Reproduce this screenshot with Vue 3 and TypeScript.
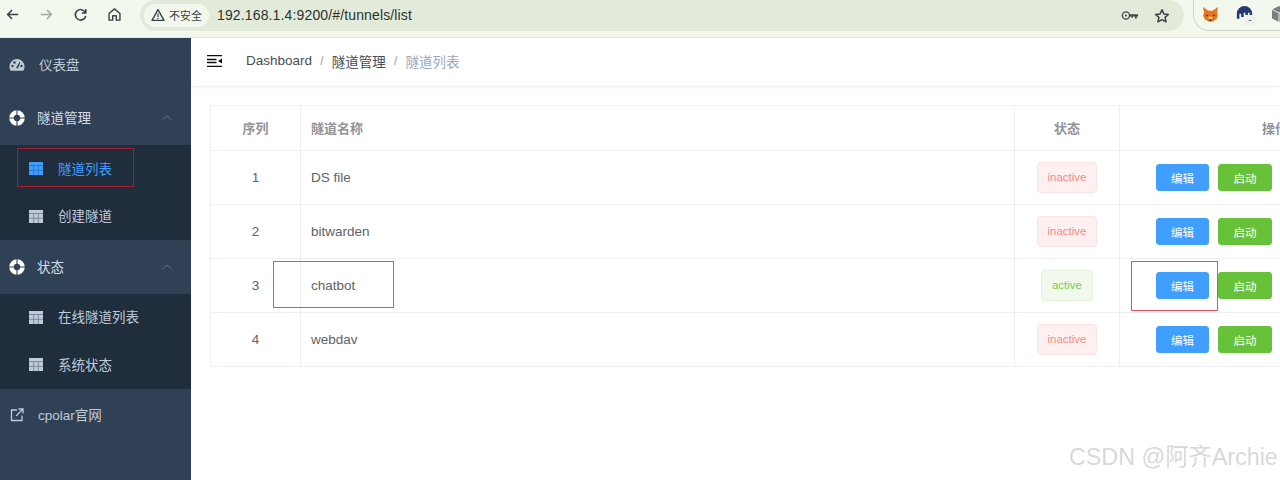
<script setup lang="ts">
interface Row { id: number; name: string; status: 'active' | 'inactive' }
const rows: Row[] = [
  { id: 1, name: 'DS file', status: 'inactive' },
  { id: 2, name: 'bitwarden', status: 'inactive' },
  { id: 3, name: 'chatbot', status: 'active' },
  { id: 4, name: 'webdav', status: 'inactive' },
]
const groups = [
  { title: '隧道管理', items: [{ label: '隧道列表', active: true }, { label: '创建隧道', active: false }] },
  { title: '状态', items: [{ label: '在线隧道列表', active: false }, { label: '系统状态', active: false }] },
]
</script>

<template>
  <div class="page">
    <div class="chrome">
      <div class="nav">
        <svg class="nav-ico" viewBox="0 0 16 16"><path d="M14 8H3M7.5 3.2 2.8 8l4.7 4.8" fill="none" stroke="#3c4043" stroke-width="1.6"/></svg>
        <svg class="nav-ico" viewBox="0 0 16 16"><path d="M2 8h11M8.5 3.2 13.2 8l-4.700 4.800" fill="none" stroke="#a3a7a0" stroke-width="1.6"/></svg>
        <svg class="nav-ico" viewBox="0 0 16 16"><path d="M13.2 6A5.600 5.600 0 1 0 13.600 9.400M13.600 2.200V6.400H9.400" fill="none" stroke="#3c4043" stroke-width="1.7"/></svg>
        <svg class="nav-ico" viewBox="0 0 16 16"><path d="M2.200 7 8 2l5.800 5v7h-3.900v-4.600H6.100V14H2.200Z" fill="none" stroke="#3c4043" stroke-width="1.5" stroke-linejoin="round"/></svg>
      </div>
      <div class="omni">
        <div class="sec">
          <svg class="warn" viewBox="0 0 14 14"><path d="M7 1.600 13 12.400H1Z" fill="none" stroke="#3c4043" stroke-width="1.4" stroke-linejoin="round"/><path d="M7 5.400v3.600M7 9.800v1.200" stroke="#3c4043" stroke-width="1.2"/></svg>
          <span>不安全</span>
        </div>
        <span class="url">192.168.1.4:9200/#/tunnels/list</span>
        <span class="grow"></span>
        <svg class="key" viewBox="0 0 20 12"><circle cx="5.500" cy="6" r="4" fill="none" stroke="#474a45" stroke-width="1.5"/><circle cx="5.500" cy="6" r="1.200" fill="#474a45"/><path d="M9.500 4.500H19V7h-1.500v2.200h-2V7h-2v1.600h-2V7H9.500Z" fill="#474a45"/></svg>
        <svg class="star" viewBox="0 0 16 16"><path d="M8 1.800l1.900 4.100 4.500.5-3.300 3 .9 4.500L8 11.700l-4 2.200.9-4.500-3.300-3 4.500-.5Z" fill="none" stroke="#3c4043" stroke-width="1.5" stroke-linejoin="round"/></svg>
      </div>
      <div class="exts">
        <svg class="fox" viewBox="0 0 18 18"><path d="M1 1l6 4h4l6-4-1.200 6 1 3-1.600 4-4 2.500H7L2.800 14l-1.600-4 1-3Z" fill="#e8751c"/><path d="M7 11l2 1 2-1-.5 3h-3Z" fill="#f4e3d0"/><path d="M8 14h2v2H8Z" fill="#3b2a1e"/><path d="M4 9l3 1-2 1ZM14 9l-3 1 2 1Z" fill="#3b2a1e"/></svg>
        <div class="avatar">
          <svg viewBox="0 0 20 20"><path d="M1 15V9a9 9 0 0 1 18 0v3h-3V8h-2v3h-3V8H9v5H6V9H4v6Z" fill="#25386f"/></svg>
          <span class="badge">-</span>
        </div>
        <svg class="cube" viewBox="0 0 18 18"><path d="M9 1l7 3.500v9L9 17l-7-3.500v-9Z" fill="#7c7f7b"/><path d="M2 4.500 9 8l7-3.500M9 8v9" fill="none" stroke="#e8ecdf" stroke-width="1"/></svg>
      </div>
    </div>

    <div class="body">
      <aside class="side">
        <a class="item top">
          <svg class="ico-gauge" viewBox="0 0 16 14"><path d="M8 1a7.500 7.500 0 0 0-7.500 7.500c0 1.600.5 3 1.300 4.200h12.400c.8-1.200 1.300-2.600 1.300-4.200A7.500 7.500 0 0 0 8 1Z" fill="#bfcbd9"/><circle cx="3.500" cy="8" r="1.200" fill="#304156"/><circle cx="5.500" cy="4.500" r="1.200" fill="#304156"/><circle cx="12.500" cy="8" r="1.200" fill="#304156"/><path d="M7 10 10.500 4l.8.400L9 10.500Z" fill="#304156"/></svg>
          <span>仪表盘</span>
        </a>
        <template v-for="g in groups" :key="g.title">
          <div class="item group">
            <svg class="ico-ring" viewBox="0 0 16 16"><circle cx="8" cy="8" r="5.500" fill="none" stroke="#fff" stroke-width="4.600"/><path d="M0 8h5M11 8h5M8 0v5M8 11v5" stroke="#304156" stroke-width="1.100"/></svg>
            <span class="g-title">{{ g.title }}</span>
            <svg class="chev" viewBox="0 0 12 8"><path d="M1.500 6 6 2l4.500 4" fill="none" stroke="#5d6d82" stroke-width="1"/></svg>
          </div>
          <div class="sub">
            <a v-for="it in g.items" :key="it.label" class="sub-item" :class="{ on: it.active }">
              <svg class="ico-table" viewBox="0 0 14 13"><path d="M0 0h14v13H0Z" fill="currentColor"/><path d="M0 3.500h14M0 8.300h14M4.700 3.500v9.500M9.300 3.500v9.500" :stroke="it.active ? '#1f6fc4' : '#6f7b8a'" stroke-width=".8"/></svg>
              <span>{{ it.label }}</span>
            </a>
          </div>
        </template>
        <a class="item top link">
          <svg class="ico-ext" viewBox="0 0 14 14"><path d="M7 2H1.500v10.500H12V7.500" fill="none" stroke="#bfcbd9" stroke-width="1.300"/><path d="M6 8l6.500-6.500M8.500 1h4.500v4.500" fill="none" stroke="#bfcbd9" stroke-width="1.300"/></svg>
          <span>cpolar官网</span>
        </a>
      </aside>

      <main class="main">
        <header class="head">
          <svg class="burger" viewBox="0 0 15 12"><path d="M0 .7h15M0 4.500h9.500M0 7.500h9.500M0 11.300h15" stroke="#111" stroke-width="1.300"/><path d="M15 3.500v5L11 6Z" fill="#111"/></svg>
          <nav class="crumbs">
            <span class="c-strong">Dashboard</span><i>/</i>
            <span class="c-strong">隧道管理</span><i>/</i>
            <span class="c-last">隧道列表</span>
          </nav>
        </header>
        <section class="content">
          <div class="table">
            <div class="tr th">
              <div class="td c1">序列</div>
              <div class="td c2">隧道名称</div>
              <div class="td c3">状态</div>
              <div class="td c4 op-h"><span>操作</span></div>
            </div>
            <div v-for="r in rows" :key="r.id" class="tr">
              <div class="td c1">{{ r.id }}</div>
              <div class="td c2">{{ r.name }}</div>
              <div class="td c3"><span class="tag" :class="r.status">{{ r.status }}</span></div>
              <div class="td c4 ops">
                <button class="btn blue">编辑</button>
                <button class="btn green">启动</button>
              </div>
            </div>
          </div>
        </section>
      </main>
    </div>

    <div class="anno anno-list"></div>
    <div class="anno anno-name"></div>
    <div class="anno anno-edit"></div>
    <div class="wm">CSDN @阿齐Archie</div>
  </div>
</template>

<style>
html, body { margin: 0; padding: 0; background: #fff; overflow: hidden; }
</style>

<style scoped>
.page {
  position: relative;
  width: 1280px;
  height: 480px;
  overflow: hidden;
  display: flex;
  flex-direction: column;
  font-family: "Liberation Sans", "Noto Sans CJK SC", sans-serif;
}
.chrome {
  height: 38px;
  box-sizing: border-box;
  flex: none;
  background: #f3f8ee;
  border-bottom: 1px solid #e4e7e0;
  display: flex;
  align-items: flex-start;
}
.nav { display: flex; width: 140px; flex: none; padding: 7px 0 0 5px; box-sizing: border-box; gap: 19px; }
.nav-ico { width: 15px; height: 15px; flex: none; }
.omni {
  width: 1044px;
  height: 31px;
  flex: none;
  background: #e2ebd9;
  border-radius: 16px;
  display: flex;
  align-items: center;
  padding: 0 14px 0 4px;
  box-sizing: border-box;
}
.sec {
  height: 23px;
  width: 65px;
  margin-top: -1px;
  background: #f3f8ee;
  border-radius: 12px;
  display: flex;
  align-items: center;
  justify-content: center;
  gap: 4px;
  font-size: 11px;
  color: #3c4043;
  flex: none;
}
.warn { width: 14px; height: 14px; }
.url { font-size: 14px; color: #2d322c; margin-left: 8px; margin-top: -1px; letter-spacing: 0.01em; }
.grow { flex: 1; }
.key { width: 18px; height: 11px; margin-right: 15px; }
.star { width: 16px; height: 16px; }
.exts {
  margin-left: 9px;
  width: 120px;
  height: 31px;
  box-sizing: border-box;
  border: 1px solid #cfd3c9;
  border-top: none;
  border-right: none;
  border-radius: 0 0 0 16px;
  display: flex;
  align-items: center;
  padding: 0 0 2px 8px;
  gap: 17px;
  flex: none;
}
.fox { width: 17px; height: 17px; flex: none; }
.avatar { position: relative; width: 17px; height: 17px; flex: none; }
.avatar svg { width: 17px; height: 17px; display: block; }
.badge {
  position: absolute;
  left: 9px;
  top: 9px;
  width: 10px;
  height: 10px;
  background: #eef0ea;
  font-size: 9px;
  line-height: 10px;
  text-align: center;
  color: #222;
}
.cube { width: 18px; height: 18px; flex: none; }

.body { flex: 1; display: flex; min-height: 0; }
.side { width: 191px; flex: none; background: #304156; color: #bfcbd9; font-size: 13.500px; }
.side span { position: relative; top: -1px; }
.item { display: flex; align-items: center; height: 53.500px; box-sizing: border-box; }
.top { padding-left: 9px; gap: 14px; }
.top.link { padding-left: 10px; gap: 14px; }
.top span { color: #bfcbd9; }
.group { padding-left: 9px; color: #d4dce6; }
.g-title { margin-left: 12px; flex: 1; }
.chev { width: 12px; height: 8px; margin-right: 18px; }
.sub { background: #1f2d3d; }
.sub-item { display: flex; align-items: center; height: 47.500px; padding-left: 29px; gap: 15px; color: #bfcbd9; }
.sub-item.on { color: #409eff; }
.sub-item.on span { color: #409eff; }
.ico-gauge { width: 16px; height: 14px; flex: none; }
.ico-ring { width: 16px; height: 16px; flex: none; }
.ico-table { width: 14px; height: 13px; flex: none; }
.ico-ext { width: 14px; height: 14px; flex: none; }

.main { flex: 1; min-width: 0; display: flex; flex-direction: column; background: #fff; }
.head {
  height: 49px;
  flex: none;
  box-sizing: border-box;
  border-bottom: 1px solid #f0f1f3;
  box-shadow: 0 1px 3px rgba(0, 21, 41, 0.03);
  display: flex;
  align-items: center;
  padding: 0 0 3px 16px;
}
.burger { width: 15px; height: 12px; flex: none; }
.crumbs { margin-left: 24px; font-size: 13.500px; display: flex; align-items: center; }
.crumbs i { font-style: normal; color: #c0c4cc; margin: 0 8px; font-weight: 700; }
.c-strong { color: #4a4d52; }
.c-last { color: #97a8be; }
.content { padding: 18px 0 0 19px; }
.table { width: 1200px; border: solid #ebeef5; border-width: 1px 0 0 1px; color: #606266; font-size: 13.500px; }
.tr { display: flex; height: 54px; border-bottom: 1px solid #ebeef5; box-sizing: border-box; }
.tr.th { height: 45px; color: #909399; font-weight: 700; font-size: 13px; }
.td { display: flex; align-items: center; box-sizing: border-box; border-right: 1px solid #ebeef5; flex: none; }
.th .td { padding-bottom: 2px; }
.c1 { width: 90px; justify-content: center; }
.c2 { width: 714px; padding-left: 10px; }
.c3 { width: 105px; justify-content: center; }
.c4 { width: 290px; }
.op-h { padding-left: 142px; }
.ops { padding-left: 36px; gap: 9px; }
.tag {
  height: 31px;
  line-height: 29px;
  box-sizing: border-box;
  padding: 0 9.500px;
  font-size: 11.500px;
  border-radius: 4px;
  border: 1px solid;
}
.tag.inactive { color: #f78989; background: #fef0f0; border-color: #fde2e2; }
.tag.active { color: #7ccb55; background: #f0f9eb; border-color: #e1f3d8; }
.btn {
  width: 53px;
  height: 27px;
  padding: 0;
  border-radius: 3px;
  border: 1px solid;
  color: #fff;
  font-size: 11.500px;
  font-family: inherit;
  flex: none;
}
.blue { background: #409eff; border-color: #409eff; }
.green { background: #67c23a; border-color: #67c23a; width: 54px; }

.anno { position: absolute; box-sizing: border-box; border-style: solid; border-width: 1px; pointer-events: none; }
.anno-list { left: 17px; top: 148px; width: 117px; height: 39px; border-color: #a81e2c; }
.anno-name { left: 273px; top: 261px; width: 121px; height: 47px; border-color: #e8505a; }
.anno-edit { left: 1131px; top: 261px; width: 87px; height: 50px; border-color: #e8505a; }
.wm {
  position: absolute;
  left: 1069px;
  top: 441px;
  font-size: 23.300px;
  line-height: 32px;
  color: rgba(160, 160, 160, 0.42);
  white-space: nowrap;
}
</style>
